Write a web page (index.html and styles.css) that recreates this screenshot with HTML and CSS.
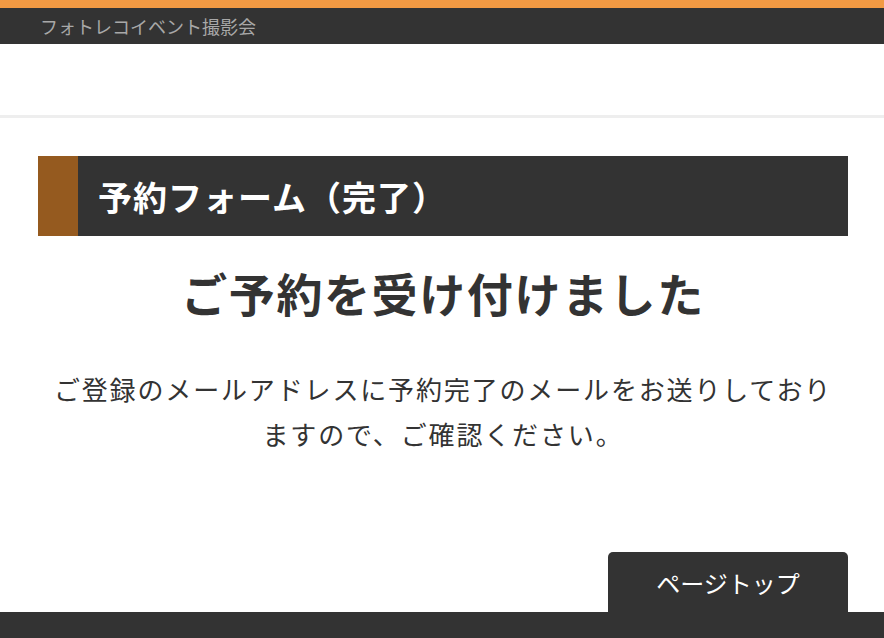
FILE: index.html
```html
<!DOCTYPE html>
<html lang="ja">
<head>
<meta charset="utf-8">
<link rel="stylesheet" href="styles.css">
</head>
<body>
<div class="topline"></div>
<div class="sitebar"><span class="sitename">フォトレコイベント撮影会</span></div>
<header class="header"></header>
<main class="main">
  <h1 class="page-title">予約フォーム（完了）</h1>
  <h2 class="done-title">ご予約を受け付けました</h2>
  <p class="done-text">ご登録のメールアドレスに予約完了のメールをお送りしておりますので、ご確認ください。</p>
  <div class="pagetop-row"><a class="pagetop" href="#">ページトップ</a></div>
</main>
<footer class="footer"></footer>
</body>
</html>
```
FILE: styles.css
```css
* { box-sizing: border-box; }
html, body { margin: 0; padding: 0; }
body {
  font-family: "Noto Sans CJK JP", "Noto Sans", sans-serif;
  color: #333;
  background: #fff;
  width: 884px;
  height: 638px;
  overflow: hidden;
}
.topline { height: 8px; background: #f39a43; }
.sitebar {
  height: 36px;
  background: #333;
  padding-left: 40px;
  display: flex;
  align-items: center;
}
.sitename { color: #a8a8a8; font-size: 18px; line-height: 1; }
.header {
  height: 74px;
  border-bottom: 3px solid #eee;
}
.main { padding: 38px 36px 0 38px; }
.page-title {
  margin: 0;
  height: 80px;
  background: #333;
  border-left: 40px solid #955a1f;
  color: #fff;
  font-size: 34px;
  font-weight: 700;
  letter-spacing: 1px;
  padding-left: 20px;
  display: flex;
  align-items: center;
}
.done-title {
  margin: 18px 0 0;
  text-align: center;
  font-size: 46px;
  font-weight: 700;
  letter-spacing: 1.6px;
  line-height: 76px;
}
.done-text {
  margin: 36px 0 0;
  text-align: center;
  font-size: 26px;
  letter-spacing: 1.85px;
  line-height: 45px;
  padding: 0 10px;
}
.pagetop-row { display: flex; justify-content: flex-end; margin-top: 96px; }
.pagetop {
  width: 240px;
  height: 60px;
  background: #333;
  color: #fff;
  text-decoration: none;
  border-radius: 5px 5px 0 0;
  font-size: 24px;
  display: flex;
  align-items: center;
  justify-content: center;
}
.footer { height: 40px; background: #333; }
```
